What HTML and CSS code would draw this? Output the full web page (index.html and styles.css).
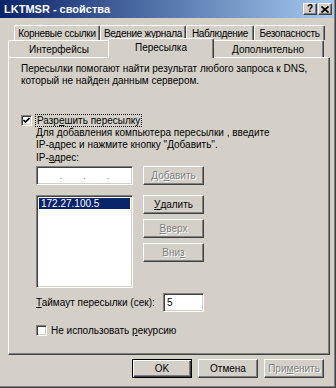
FILE: index.html
```html
<!DOCTYPE html>
<html>
<head>
<meta charset="utf-8">
<link rel="stylesheet" href="styles.css">
</head>
<body>
<div class="window">
  <div class="titlebar">
    <span class="title">LKTMSR - свойства</span>
    <div class="cbtn help">?</div>
    <div class="cbtn close"><svg width="8" height="7" viewBox="0 0 8 7"><path d="M0.5 0.5L7.5 6.5M7.5 0.5L0.5 6.5" stroke="#000" stroke-width="1.6"/></svg></div>
  </div>

  <div class="tabs">
    <div class="tabrow row1">
      <div class="tab w86">Корневые ссылки</div>
      <div class="tab w86">Ведение журнала</div>
      <div class="tab w68">Наблюдение</div>
      <div class="tab w71">Безопасность</div>
    </div>
    <div class="tabrow row2">
      <div class="tab w102">Интерфейсы</div>
      <div class="tab w102 sel">Пересылка</div>
      <div class="tab w112">Дополнительно</div>
    </div>
  </div>

  <div class="panel">
    <p class="desc">Пересылки помогают найти результат любого запроса к DNS,<br>который не найден данным сервером.</p>

    <div class="check-row enable">
      <span class="cb"><svg width="7" height="7" viewBox="0 0 7 7"><path d="M0.5 3L2.5 5L6.5 1" fill="none" stroke="#000" stroke-width="1.7"/></svg></span>
      <span class="focus">Разр<u>е</u>шить пересылку</span>
    </div>

    <div class="group">
      <p class="hint">Для добавления компьютера пересылки , введите<br>IP-адрес и нажмите кнопку "Добавить".</p>
      <div class="label">IP-<u>а</u>дрес:</div>

      <div class="ip-row">
        <div class="field ip"><span class="dot">.</span><span class="dot">.</span><span class="dot">.</span></div>
        <button class="btn disabled">До<u>б</u>авить</button>
      </div>

      <div class="list-row">
        <div class="field list"><div class="item sel">172.27.100.5</div></div>
        <div class="btn-col">
          <button class="btn"><u>У</u>далить</button>
          <button class="btn disabled"><u>В</u>верх</button>
          <button class="btn disabled">Вни<u>з</u></button>
        </div>
      </div>

      <div class="timeout-row">
        <span class="tlabel"><u>Т</u>аймаут пересылки (сек):</span>
        <div class="field num">5</div>
      </div>

      <div class="check-row recur">
        <span class="cb"></span>
        <span>Не использовать <u>р</u>екурсию</span>
      </div>
    </div>
  </div>

  <div class="footer">
    <button class="btn default">OK</button>
    <button class="btn">Отмена</button>
    <button class="btn disabled">При<u>м</u>енить</button>
  </div>
</div>
</body>
</html>
```

FILE: styles.css
```css
* { box-sizing: border-box; }
html, body { margin: 0; padding: 0; }
body {
  width: 336px;
  height: 388px;
  overflow: hidden;
  background: #d4d0c8;
  font-family: "Liberation Sans", Arial, sans-serif;
  font-size: 10px;
  color: #000;
}
u { text-decoration: underline; text-underline-offset: 1px; }

.window {
  width: 336px;
  height: 388px;
  background: #d4d0c8;
  box-shadow: inset -1px -1px #404040, inset -2px -2px #808080;
  display: flex;
  flex-direction: column;
}

/* title bar */
.titlebar {
  height: 18px;
  margin-right: 2px;
  background: linear-gradient(to right, #0a246a, #a6caf0);
  display: flex;
  align-items: center;
  padding: 0 2px 0 4px;
}
.title {
  flex: 1;
  color: #fff;
  font-weight: bold;
  font-size: 11px;
}
.cbtn {
  width: 14px;
  height: 12px;
  background: #d4d0c8;
  border: 1px solid;
  border-color: #fff #404040 #404040 #fff;
  box-shadow: inset -1px -1px #808080;
  display: flex;
  align-items: center;
  justify-content: center;
  font-weight: bold;
  font-size: 10px;
  line-height: 1;
}
.cbtn.help { margin-right: 1px; }

/* tabs */
.tabs { margin-top: 7px; }
.tabrow { display: flex; }
.row1 { height: 15px; padding-left: 14px; }
.row1 .tab { letter-spacing: -0.3px; }
.row2 { height: 17px; padding-left: 8px; align-items: flex-end; }
.tab {
  height: 100%;
  background: #d4d0c8;
  border: 1px solid;
  border-color: #fff #404040 transparent #fff;
  border-bottom: none;
  border-radius: 2px 2px 0 0;
  box-shadow: inset -1px 0 #808080;
  display: flex;
  align-items: center;
  justify-content: center;
  white-space: nowrap;
  overflow: visible;
}
.row2 .tab { height: 17px; }
.w86 { width: 86px; }
.w68 { width: 68px; }
.w71 { width: 71px; }
.w102 { width: 102px; }
.w112 { width: 112px; }
.tab.sel {
  position: relative;
  z-index: 1;
  width: 106px;
  height: 20px;
  margin: 0 -2px -1px;
  padding-bottom: 2px;
}

/* panel */
.panel {
  width: 322px;
  height: 298px;
  margin-left: 8px;
  border: 1px solid;
  border-color: #fff #404040 #404040 #fff;
  box-shadow: inset -1px -1px #808080;
  padding: 0 0 0 12px;
}
.desc {
  margin: 5px 0 0;
  line-height: 12px;
}
.check-row {
  display: flex;
  align-items: center;
  height: 11px;
}
.enable { margin-top: 28px; }
.cb {
  width: 11px;
  height: 11px;
  background: #fff;
  border: 1px solid;
  border-color: #808080 #fff #fff #808080;
  box-shadow: inset 1px 1px #404040, inset -1px -1px #d4d0c8;
  display: flex;
  align-items: center;
  justify-content: center;
  margin-right: 4px;
}
.focus {
  outline: 1px dotted #000;
  padding: 0 1px;
  line-height: 11px;
}

.group { margin-left: 15px; }
.hint {
  margin: 1px 0 0;
  line-height: 12px;
}
.label { margin-top: 1px; line-height: 12px; }

.field {
  background: #fff;
  border: 1px solid;
  border-color: #808080 #fff #fff #808080;
  box-shadow: inset 1px 1px #404040, inset -1px -1px #d4d0c8;
}
.ip-row {
  display: flex;
  margin-top: 2px;
  height: 19px;
}
.ip {
  width: 97px;
  height: 19px;
  display: flex;
  justify-content: space-around;
  padding: 0 12px;
  align-items: center;
  color: #8a8a8a;
}
.dot { line-height: 10px; }

.btn {
  width: 61px;
  height: 19px;
  padding: 0;
  margin: 0;
  background: #d4d0c8;
  border: 1px solid;
  border-color: #fff #404040 #404040 #fff;
  box-shadow: inset -1px -1px #808080;
  font: inherit;
  color: #000;
  display: flex;
  align-items: center;
  justify-content: center;
}
.btn.disabled { color: #808080; text-shadow: 1px 1px #fff; }
.btn.default {
  border-color: #000;
  box-shadow: inset 1px 1px #fff, inset -1px -1px #404040, inset -2px -2px #808080;
}
.ip-row .btn { margin-left: 10px; }

.list-row {
  display: flex;
  margin-top: 10px;
}
.list {
  width: 97px;
  height: 93px;
  padding: 2px;
}
.item {
  height: 11px;
  line-height: 11px;
  padding-left: 2px;
}
.item.sel { background: #0a246a; color: #fff; }
.btn-col {
  display: flex;
  flex-direction: column;
  gap: 5px;
  margin-left: 10px;
}

.timeout-row {
  display: flex;
  align-items: center;
  margin-top: 5px;
}
.tlabel { width: 127px; }
.num {
  width: 41px;
  height: 19px;
  padding-left: 3px;
  display: flex;
  align-items: center;
}

.recur { margin-top: 13px; }

.footer {
  display: flex;
  justify-content: flex-end;
  gap: 6px;
  margin-top: 4px;
  padding-right: 12px;
}
.footer .btn { width: 60px; }
```
